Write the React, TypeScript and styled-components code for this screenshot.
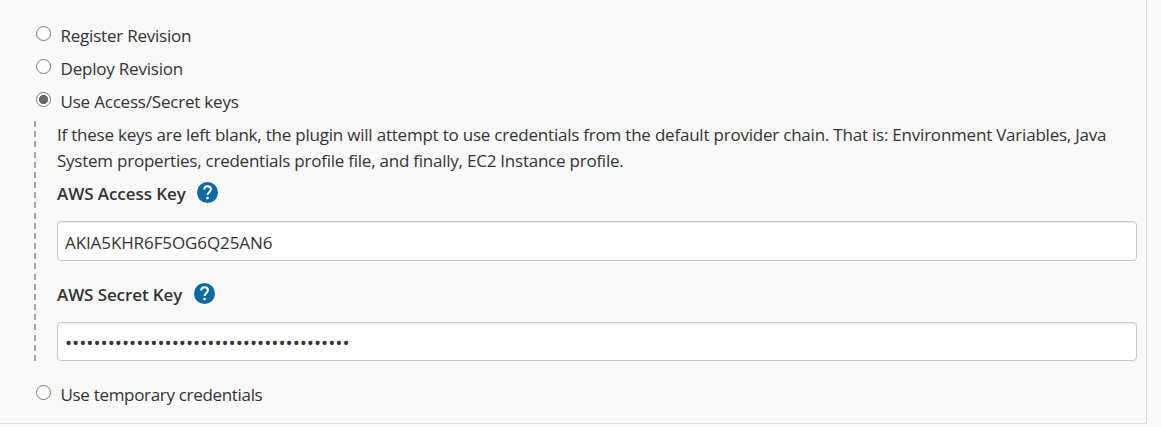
import React from "react";
import styled, { createGlobalStyle } from "styled-components";

const GlobalStyle = createGlobalStyle`
  * { box-sizing: border-box; }
  body {
    margin: 0;
    background: #f9f9f9;
    color: #333;
    font-family: "Open Sans", "Noto Sans", sans-serif;
    font-size: 17px;
    line-height: 26px;
  }
`;

const Panel = styled.form`
  width: 1147px;
  height: 424px;
  padding: 19px 9px 0 34px;
  border: solid #ddd;
  border-width: 0 1px 1px 0;
`;

const Option = styled.label<{ $top?: number }>`
  display: flex;
  align-items: flex-start;
  gap: 9.5px;
  height: 33px;
  margin-top: ${(p) => p.$top ?? 0}px;
  padding-top: 4px;
`;

const Radio = styled.input`
  appearance: none;
  flex: none;
  width: 15px;
  height: 15px;
  margin: 3px 0 0 2px;
  border: 1px solid #767676;
  border-radius: 50%;
  background: ${(p) => (p.checked ? "radial-gradient(circle, #6b6b6b 4.3px, #fff 5px)" : "#fff")};
`;

const Text = styled.span<{ $spacing?: number }>`
  white-space: nowrap;
  letter-spacing: ${(p) => p.$spacing ?? 0}px;
`;

const Credentials = styled.section`
  height: 240px;
  margin-top: 3px;
  padding: 1px 0 0 23px;
  background: repeating-linear-gradient(#a6a6a6 0 6px, transparent 6px 10.17px) 0 0 / 2px 100% no-repeat;
`;

const Hint = styled.p`
  margin: 0;
`;

const Line = styled(Text)`
  display: block;
`;

const FieldLabel = styled.label<{ $gap: number }>`
  display: flex;
  align-items: center;
  gap: ${(p) => p.$gap}px;
  height: 26px;
  font-weight: 600;

  span { padding-top: 1px; }
  svg { margin-top: -1px; }
`;

const Input = styled.input<{ $height: number; $spacing: number; $size?: number }>`
  display: block;
  width: 1080px;
  height: ${(p) => p.$height}px;
  padding: 2px 7px 0;
  border: 1px solid #c8c8c8;
  border-radius: 4px;
  background: #fff;
  box-shadow: inset 0 1px 1px rgba(0, 0, 0, 0.07);
  color: #333;
  font: inherit;
  font-size: ${(p) => p.$size ?? 17}px;
  letter-spacing: ${(p) => p.$spacing}px;
`;

const Field = styled.div<{ $top: number }>`
  display: flex;
  flex-direction: column;
  gap: 15px;
  margin-top: ${(p) => p.$top}px;
`;

const Help = () => (
  <svg width="21" height="21" viewBox="0 0 21 21" aria-hidden="true">
    <circle cx="10.5" cy="10.5" r="10.5" fill="#0b6aa2" />
    <path d="M7.2 7.5C7.2 5.3 8.6 4.2 10.5 4.2s3.4 1.2 3.4 3.1c0 2.5-3.3 2.8-3.3 5.7" fill="none" stroke="#fff" strokeWidth="2" />
    <circle cx="10.5" cy="16.1" r="1.4" fill="#fff" />
  </svg>
);

export default function App() {
  return (
    <>
      <GlobalStyle />
      <Panel>
        <Option><Radio type="radio" name="mode" readOnly /><Text $spacing={-0.22}>Register Revision</Text></Option>
        <Option><Radio type="radio" name="mode" readOnly /><Text $spacing={-0.2}>Deploy Revision</Text></Option>
        <Option><Radio type="radio" name="credentials" checked readOnly /><Text $spacing={-0.2}>Use Access/Secret keys</Text></Option>
        <Credentials>
          <Hint>
            <Line $spacing={-0.216}>If these keys are left blank, the plugin will attempt to use credentials from the default provider chain. That is: Environment Variables, Java</Line>
            <Line $spacing={-0.235}>System properties, credentials profile file, and finally, EC2 Instance profile.</Line>
          </Hint>
          <Field $top={6}>
            <FieldLabel $gap={11}><Text $spacing={-0.07}>AWS Access Key</Text><Help /></FieldLabel>
            <Input $height={40} $spacing={-0.1} defaultValue="AKIA5KHR6F5OG6Q25AN6" />
          </Field>
          <Field $top={20}>
            <FieldLabel $gap={12}><Text $spacing={-0.1}>AWS Secret Key</Text><Help /></FieldLabel>
            <Input $height={39} $spacing={-0.03} $size={19} type="password" defaultValue={"x".repeat(40)} />
          </Field>
        </Credentials>
        <Option $top={17}><Radio type="radio" name="credentials" readOnly /><Text $spacing={-0.32}>Use temporary credentials</Text></Option>
      </Panel>
    </>
  );
}
